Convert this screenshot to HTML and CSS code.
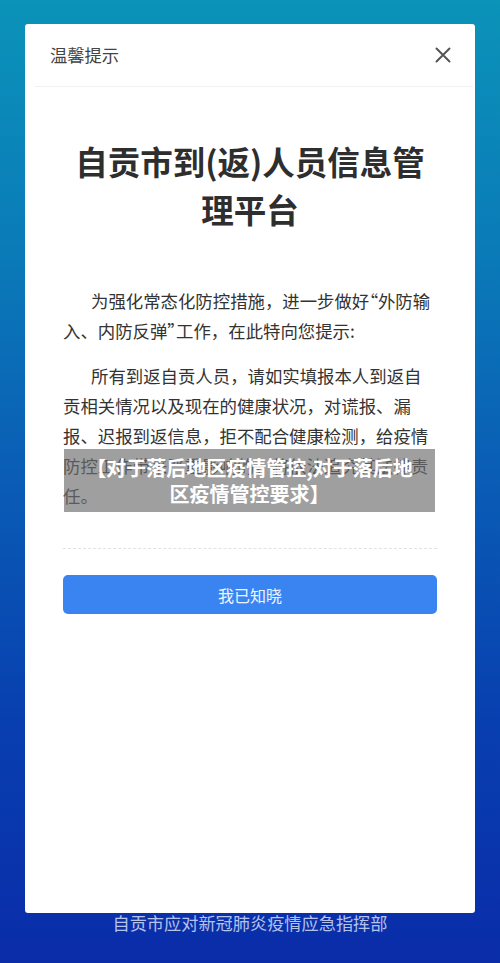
FILE: index.html
```html
<!DOCTYPE html>
<html lang="zh-CN">
<head>
<meta charset="utf-8">
<title>温馨提示</title>
<link rel="stylesheet" href="styles.css">
</head>
<body>
<div class="page">
  <div class="card">
    <div class="header">
      <span class="header-title">温馨提示</span>
      <svg class="close" width="16" height="16" viewBox="0 0 16 16"><path d="M1.5 1.5 L14.5 14.5 M14.5 1.5 L1.5 14.5" stroke="#555" stroke-width="2" fill="none" stroke-linecap="round"/></svg>
    </div>
    <h1 class="title">自贡市到(返)人员信息管理平台</h1>
    <div class="content">
      <p class="para">为强化常态化防控措施，进一步做好<span class="q">“</span>外防输入、内防反弹<span class="q">”</span>工作，在此特向您提示:</p>
      <p class="para">所有到返自贡人员，请如实填报本人到返自贡相关情况以及现在的健康状况，对谎报、漏报、迟报到返信息，拒不配合健康检测，给疫情防控工作带来严重影响的，将依法追究其法律责任。</p>
      <div class="overlay">【对于落后地区疫情管控,对于落后地区疫情管控要求】</div>
    </div>
    <div class="divider"></div>
    <button class="btn">我已知晓</button>
  </div>
  <div class="footer">自贡市应对新冠肺炎疫情应急指挥部</div>
</div>
</body>
</html>
```
FILE: styles.css
```css
html, body {
  margin: 0;
  padding: 0;
}
body {
  width: 500px;
  height: 963px;
  overflow: hidden;
  background: linear-gradient(180deg, #0b93b8 0%, #0a7cb8 25%, #0a5cb5 50%, #083fb0 75%, #0a2ca9 100%);
  font-family: "Noto Sans CJK SC", "Noto Sans", sans-serif;
}
.page {
  padding: 24px 25px 0;
  display: flex;
  flex-direction: column;
}
.card {
  position: relative;
  height: 889px;
  background: #ffffff;
  border-radius: 3px;
  box-sizing: border-box;
  padding: 0 38px;
  display: flex;
  flex-direction: column;
}
.header {
  height: 63px;
  margin: 0 -36px 0 -28px;
  padding: 0 22px 0 15px;
  border-bottom: 1px solid #f1f1f1;
  display: flex;
  align-items: center;
  justify-content: space-between;
  box-sizing: border-box;
}
.header-title {
  font-size: 17.3px;
  color: #444;
  margin-top: -1px;
}
.close {
  margin-top: -1px;
}
.title {
  margin: 50px 0 0;
  font-size: 32.5px;
  line-height: 48px;
  font-weight: 700;
  color: #2e2e2e;
  text-align: center;
  padding: 0 5px;
}
.content {
  position: relative;
  margin-top: 53px;
}
.para {
  margin: 0 0 15px;
  font-size: 17.4px;
  line-height: 30px;
  color: #333;
  text-indent: 28px;
}
.q {
  font-feature-settings: "palt";
}
.overlay {
  position: absolute;
  left: 1px;
  top: 163px;
  width: 371px;
  height: 63px;
  box-sizing: border-box;
  padding: 0 14px;
  background: rgba(110, 110, 110, 0.66);
  color: #fff;
  font-size: 20px;
  font-weight: 700;
  line-height: 26px;
  text-align: center;
  display: flex;
  align-items: center;
  justify-content: center;
}
.divider {
  margin-top: 22px;
  border-top: 1px dashed #e2e2e2;
}
.btn {
  margin-top: 26px;
  height: 39px;
  border: none;
  border-radius: 5px;
  background: #3a84f1;
  color: #eef4ff;
  font-family: "Noto Sans CJK SC", "Noto Sans", sans-serif;
  font-size: 16px;
  padding: 0;
}
.footer {
  text-align: center;
  font-size: 17.2px;
  line-height: 20px;
  color: rgba(230, 236, 255, 0.78);
}
```
